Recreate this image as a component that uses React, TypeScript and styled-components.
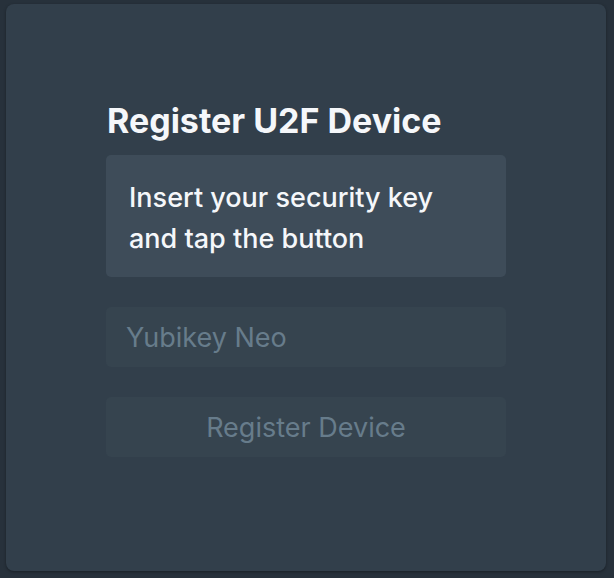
import styled, { createGlobalStyle } from "styled-components";

const GlobalStyle = createGlobalStyle`
  html, body {
    margin: 0;
    padding: 0;
    background: #27313b;
  }
  body {
    font-family: Inter, "Noto Sans", "Liberation Sans", sans-serif;
    -webkit-font-smoothing: antialiased;
  }
`;

const Page = styled.div`
  width: 614px;
  height: 578px;
  padding: 4px 8px 7px 6px;
  box-sizing: border-box;
`;

const Card = styled.div`
  width: 600px;
  height: 567px;
  background: #323f4b;
  border-radius: 8px;
  box-shadow: 0 1px 3px rgba(0, 0, 0, 0.35);
  box-sizing: border-box;
  padding: 97px 0 0 100px;
`;

const Form = styled.div`
  width: 400px;
  display: flex;
  flex-direction: column;
`;

const Title = styled.h1`
  margin: 0 0 14px 1px;
  font-size: 34px;
  line-height: 40px;
  font-weight: 700;
  color: #f5f7fa;
`;

const Notice = styled.div`
  background: #3e4c59;
  border-radius: 5px;
  padding: 22px 23px 0 23px;
  height: 122px;
  box-sizing: border-box;
  font-size: 27px;
  line-height: 41px;
  font-weight: 500;
  color: #f5f7fa;
`;

const Field = styled.input`
  margin-top: 30px;
  height: 60px;
  box-sizing: border-box;
  border: none;
  outline: none;
  border-radius: 5px;
  background: #36444f;
  padding: 0 20px;
  font-family: inherit;
  font-size: 27px;
  color: #f5f7fa;
  &::placeholder {
    color: #677c8b;
  }
`;

const Button = styled.button`
  margin-top: 30px;
  height: 60px;
  border: none;
  border-radius: 5px;
  background: #36444f;
  font-family: inherit;
  font-size: 27px;
  color: #677c8b;
  cursor: not-allowed;
`;

export default function App() {
  return (
    <>
      <GlobalStyle />
      <Page>
        <Card>
          <Form>
            <Title>Register U2F Device</Title>
            <Notice>
              Insert your security key
              <br />
              and tap the button
            </Notice>
            <Field placeholder="Yubikey Neo" />
            <Button disabled>Register Device</Button>
          </Form>
        </Card>
      </Page>
    </>
  );
}
